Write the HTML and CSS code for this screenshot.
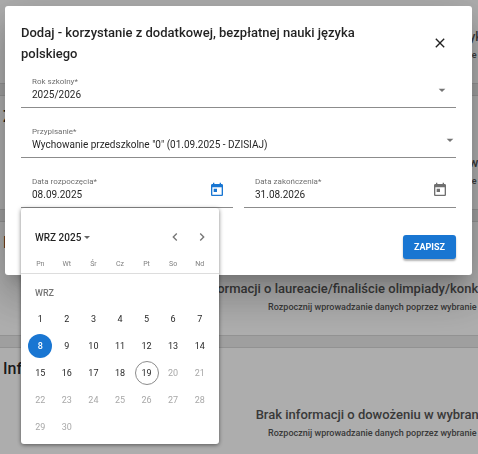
FILE: index.html
```html
<!DOCTYPE html>
<html lang="pl">
<head>
  <meta charset="UTF-8">
  <meta name="viewport" content="width=device-width, initial-scale=1.0">
  <title>Dodaj - korzystanie z nauki języka polskiego</title>
  <link rel="stylesheet" href="styles.css">
</head>
<body>
  <main class="page">
    <section class="panel panel-first">
      <p class="empty-title">Brak informacji o dodatkowej nauce języka polskiego w klasie</p>
      <p class="empty-text">Rozpocznij wprowadzanie danych poprzez wybranie przycisku "Dodaj nowy"</p>
    </section>
    <section class="panel">
      <h2>Zajęcia</h2>
      <p class="empty-title">Brak informacji o pomocy psychologicznej w wybranym okresie szkolnym</p>
      <p class="empty-text">Rozpocznij wprowadzanie danych poprzez wybranie przycisku "Dodaj nowy"</p>
    </section>
    <section class="panel">
      <h2>Informacje</h2>
      <p class="empty-title">Brak informacji o laureacie/finaliście olimpiady/konkursu w wybranym roku szkolnym</p>
      <p class="empty-text">Rozpocznij wprowadzanie danych poprzez wybranie przycisku "Dodaj nowy"</p>
    </section>
    <section class="panel">
      <h2>Informacje</h2>
      <p class="empty-title">Brak informacji o dowożeniu w wybranym roku szkolnym</p>
      <p class="empty-text">Rozpocznij wprowadzanie danych poprzez wybranie przycisku "Dodaj nowy"</p>
    </section>
  </main>

  <div class="backdrop">
    <form class="dialog" role="dialog" aria-labelledby="dialog-title">
      <header class="dialog-header">
        <h1 id="dialog-title">Dodaj - korzystanie z dodatkowej, bezpłatnej nauki języka polskiego</h1>
        <button type="button" class="icon-btn close" aria-label="Zamknij">
          <svg width="16" height="16" viewBox="0 0 24 24"><path fill="currentColor" d="M19 6.41 17.59 5 12 10.59 6.41 5 5 6.41 10.59 12 5 17.59 6.41 19 12 13.41 17.59 19 19 17.59 13.41 12z"/></svg>
        </button>
      </header>

      <div class="field">
        <label for="year">Rok szkolny*</label>
        <select id="year">
          <option>2025/2026</option>
        </select>
        <svg class="arrow arrow-inset" width="16" height="16" viewBox="0 0 24 24"><path fill="currentColor" d="m7 10 5 5 5-5z"/></svg>
      </div>

      <div class="field">
        <label for="assignment">Przypisanie*</label>
        <select id="assignment">
          <option>Wychowanie przedszkolne "0" (01.09.2025 - DZISIAJ)</option>
        </select>
        <svg class="arrow" width="16" height="16" viewBox="0 0 24 24"><path fill="currentColor" d="m7 10 5 5 5-5z"/></svg>
      </div>

      <div class="dates">
        <div class="field field-date">
          <div class="field-text">
            <label for="from">Data rozpoczęcia*</label>
            <input type="text" id="from" value="08.09.2025">
          </div>
          <button type="button" class="icon-btn active" aria-label="Otwórz kalendarz">
            <svg width="16" height="16" viewBox="0 0 24 24"><path fill="currentColor" d="M19 3h-1V1h-2v2H8V1H6v2H5c-1.110 0-1.990.9-1.990 2L3 19c0 1.100.890 2 2 2h14c1.100 0 2-.9 2-2V5c0-1.100-.9-2-2-2zm0 16H5V8h14v11zM7 10h5v5H7z"/></svg>
          </button>

          <div class="calendar">
            <div class="calendar-header">
              <button type="button" class="period">WRZ 2025
                <svg width="6" height="3" viewBox="0 0 6 3"><path fill="currentColor" d="M0 0h6L3 3z"/></svg>
              </button>
              <button type="button" class="nav" aria-label="Poprzedni miesiąc">
                <svg width="16" height="16" viewBox="0 0 24 24"><path fill="currentColor" d="M15.410 7.410 14 6l-6 6 6 6 1.410-1.410L10.830 12z"/></svg>
              </button>
              <button type="button" class="nav" aria-label="Następny miesiąc">
                <svg width="16" height="16" viewBox="0 0 24 24"><path fill="currentColor" d="M10 6 8.590 7.410 13.170 12l-4.580 4.590L10 18l6-6z"/></svg>
              </button>
            </div>
            <table>
              <thead>
                <tr><th>Pn</th><th>Wt</th><th>Śr</th><th>Cz</th><th>Pt</th><th>So</th><th>Nd</th></tr>
              </thead>
              <tbody>
                <tr><td class="month" colspan="7">WRZ</td></tr>
                <tr>
                  <td><button type="button">1</button></td>
                  <td><button type="button">2</button></td>
                  <td><button type="button">3</button></td>
                  <td><button type="button">4</button></td>
                  <td><button type="button">5</button></td>
                  <td><button type="button">6</button></td>
                  <td><button type="button">7</button></td>
                </tr>
                <tr>
                  <td><button type="button" class="selected">8</button></td>
                  <td><button type="button">9</button></td>
                  <td><button type="button">10</button></td>
                  <td><button type="button">11</button></td>
                  <td><button type="button">12</button></td>
                  <td><button type="button">13</button></td>
                  <td><button type="button">14</button></td>
                </tr>
                <tr>
                  <td><button type="button">15</button></td>
                  <td><button type="button">16</button></td>
                  <td><button type="button">17</button></td>
                  <td><button type="button">18</button></td>
                  <td><button type="button" class="today">19</button></td>
                  <td><button type="button" disabled>20</button></td>
                  <td><button type="button" disabled>21</button></td>
                </tr>
                <tr>
                  <td><button type="button" disabled>22</button></td>
                  <td><button type="button" disabled>23</button></td>
                  <td><button type="button" disabled>24</button></td>
                  <td><button type="button" disabled>25</button></td>
                  <td><button type="button" disabled>26</button></td>
                  <td><button type="button" disabled>27</button></td>
                  <td><button type="button" disabled>28</button></td>
                </tr>
                <tr>
                  <td><button type="button" disabled>29</button></td>
                  <td><button type="button" disabled>30</button></td>
                </tr>
              </tbody>
            </table>
          </div>
        </div>

        <div class="field field-date">
          <div class="field-text">
            <label for="to">Data zakończenia*</label>
            <input type="text" id="to" value="31.08.2026">
          </div>
          <button type="button" class="icon-btn" aria-label="Otwórz kalendarz">
            <svg width="16" height="16" viewBox="0 0 24 24"><path fill="currentColor" d="M19 3h-1V1h-2v2H8V1H6v2H5c-1.110 0-1.990.9-1.990 2L3 19c0 1.100.890 2 2 2h14c1.100 0 2-.9 2-2V5c0-1.100-.9-2-2-2zm0 16H5V8h14v11zM7 10h5v5H7z"/></svg>
          </button>
        </div>
      </div>

      <div class="actions">
        <button type="submit" class="save">ZAPISZ</button>
      </div>
    </form>
  </div>
</body>
</html>
```

FILE: styles.css
```css
* { box-sizing: border-box; }
body {
  margin: 0;
  height: 100vh;
  overflow: hidden;
  font-family: Roboto, "Noto Sans", sans-serif;
  color: rgba(0, 0, 0, .87);
  background: #ebebeb;
}
h1, h2, p { margin: 0; font-weight: 500; }
button, input, select { font: inherit; color: inherit; }
button { padding: 0; border: 0; background: none; cursor: pointer; }
svg { display: block; }

/* page under the dialog */
.page {
  display: flex;
  flex-direction: column;
  gap: 11px;
  min-width: 840px;
}
.panel {
  height: 115px;
  padding: 9px 3px;
  background: #fff;
  border-top: 1px solid #d8d8d8;
  border-bottom: 1px solid #d8d8d8;
}
.panel-first { height: 84px; padding-top: 27px; border-top: 0; }
.panel h2 { font-size: 16px; line-height: 24px; margin-bottom: 24px; }
.empty-title {
  font-size: 13px;
  line-height: 20px;
  text-align: center;
  color: #555;
}
.empty-text {
  font-size: 9px;
  line-height: 16px;
  text-align: center;
  color: #555;
}

/* dialog */
.backdrop {
  position: fixed;
  inset: 0;
  padding: 6px 6px 0 5px;
  background: rgba(0, 0, 0, .32);
}
.dialog {
  padding: 16px;
  background: #fff;
  border-radius: 3px;
  box-shadow: 0 11px 15px -7px rgba(0, 0, 0, .2), 0 24px 38px 3px rgba(0, 0, 0, .14), 0 9px 46px 8px rgba(0, 0, 0, .12);
}
.dialog-header {
  display: flex;
  align-items: center;
  justify-content: space-between;
  margin-bottom: 8px;
}
.dialog-header h1 { max-width: 360px; font-size: 13px; line-height: 21px; }
.icon-btn { color: #6f6f6f; }
.icon-btn.active { color: #1976d2; }
.close { margin-right: 8px; color: #222; }

.field {
  position: relative;
  height: 36px;
  margin-bottom: 14px;
  padding: 5px 0 0 11px;
  border-bottom: 1px solid #8c8c8c;
}
.field label {
  display: block;
  font-size: 8px;
  line-height: 10px;
  color: rgba(0, 0, 0, .6);
}
.field select, .field input {
  display: block;
  width: 100%;
  height: 16px;
  padding: 0;
  border: 0;
  outline: 0;
  appearance: none;
  background: transparent;
  font-size: 10px;
  line-height: 16px;
}
.arrow {
  position: absolute;
  top: 10px;
  right: -2px;
  color: #757575;
  pointer-events: none;
}
.arrow-inset { right: 6px; }
.dates {
  display: grid;
  grid-template-columns: 1fr 1fr;
  gap: 11px;
}
.field-date { display: flex; justify-content: space-between; }
.field-text { flex: 1; min-width: 0; }
.field-date .icon-btn { width: 32px; height: 26px; }
.field-date .icon-btn svg { margin: 0 auto; }

.actions { display: flex; justify-content: flex-end; margin-top: 13px; }
.save {
  height: 24px;
  padding: 0 11px;
  border-radius: 3px;
  background: #1976d2;
  color: #fff;
  font-size: 9px;
  font-weight: 700;
  box-shadow: 0 2px 2px rgba(0, 0, 0, .3);
}

/* calendar */
.calendar {
  position: absolute;
  top: 36px;
  left: 0;
  z-index: 1;
  width: 198px;
  height: 236px;
  background: #fff;
  border-radius: 3px;
  box-shadow: 0 1px 4px rgba(0, 0, 0, .5);
}
.calendar-header {
  display: flex;
  align-items: center;
  padding: 16px 4px 0 14px;
}
.period {
  display: flex;
  align-items: center;
  gap: 3px;
  margin-right: auto;
  font-size: 10px;
  font-weight: 500;
}
.period svg { color: #666; }
.nav { width: 27px; height: 26px; color: #757575; }
.nav svg { margin: 0 auto; }
.calendar table {
  width: 100%;
  padding: 0 6px;
  border-spacing: 0;
  table-layout: fixed;
  background: linear-gradient(#ddd, #ddd) 0 23px / 100% 1px no-repeat;
}
.calendar th {
  height: 24px;
  padding: 3px 0 0;
  font-size: 7px;
  font-weight: 400;
  line-height: 8px;
  color: #808080;
}
.calendar td {
  height: 27px;
  padding: 0;
  text-align: center;
  font-size: 9px;
}
.calendar .month {
  height: 31px;
  padding: 6px 0 0 8px;
  text-align: left;
  font-weight: 500;
  color: #757575;
}
.calendar td button {
  display: block;
  width: 24px;
  height: 24px;
  margin: 0 auto;
  border-radius: 50%;
}
.calendar td .selected { background: #1976d2; color: #fff; font-weight: 500; }
.calendar td .today { border: 1px solid #8c8c8c; }
.calendar td button:disabled { color: #a8a8a8; }
```
